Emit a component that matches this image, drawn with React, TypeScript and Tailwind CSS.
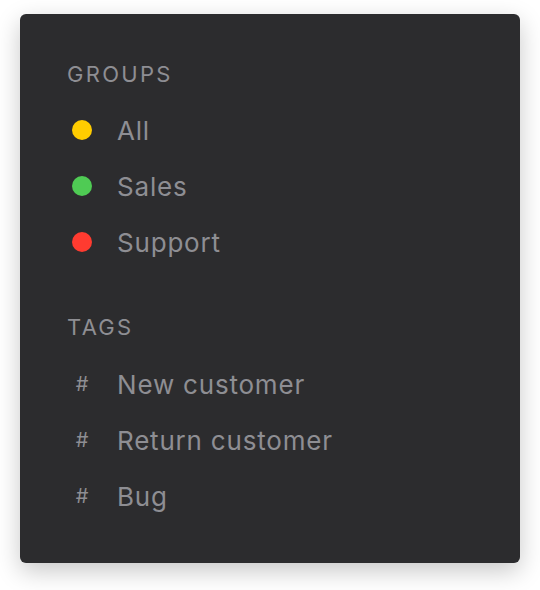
import React from 'react';

const groups = [
  { label: 'All', color: 'bg-[#ffcc00]' },
  { label: 'Sales', color: 'bg-[#4fcb54]' },
  { label: 'Support', color: 'bg-[#ff3b30]' },
];

const tags = ['New customer', 'Return customer', 'Bug'];

function SectionTitle({ children }: { children: React.ReactNode }) {
  return (
    <div className="h-[24px] leading-[24px] text-[22px] tracking-[2.3px] text-[#8e8e93] uppercase">
      {children}
    </div>
  );
}

export default function App() {
  return (
    <div className="min-h-[590px] bg-white pt-[14px] pl-[20px] font-['Inter','Noto_Sans',sans-serif]">
      <div className="w-[500px] h-[549px] bg-[#2c2c2e] rounded-[6px] shadow-[0_8px_24px_rgba(0,0,0,0.22)] px-[47px] pt-[48px]">
        {/* Groups */}
        <SectionTitle>Groups</SectionTitle>
        <div className="mt-[16px]">
          {groups.map((g) => (
            <div key={g.label} className="h-[56px] flex items-center">
              <div className="w-[30px] flex justify-center">
                <span className={`w-[20px] h-[20px] rounded-full ${g.color}`} />
              </div>
              <span className="ml-[20px] text-[26px] tracking-[0.8px] text-[#8e8e93]">{g.label}</span>
            </div>
          ))}
        </div>

        {/* Tags */}
        <div className="mt-[45px]">
          <SectionTitle>Tags</SectionTitle>
        </div>
        <div className="mt-[17px]">
          {tags.map((t) => (
            <div key={t} className="h-[56px] flex items-center">
              <div className="w-[30px] flex justify-center text-[20px] text-[#8e8e93]">#</div>
              <span className="ml-[20px] text-[26px] tracking-[0.8px] text-[#8e8e93]">{t}</span>
            </div>
          ))}
        </div>
      </div>
    </div>
  );
}
